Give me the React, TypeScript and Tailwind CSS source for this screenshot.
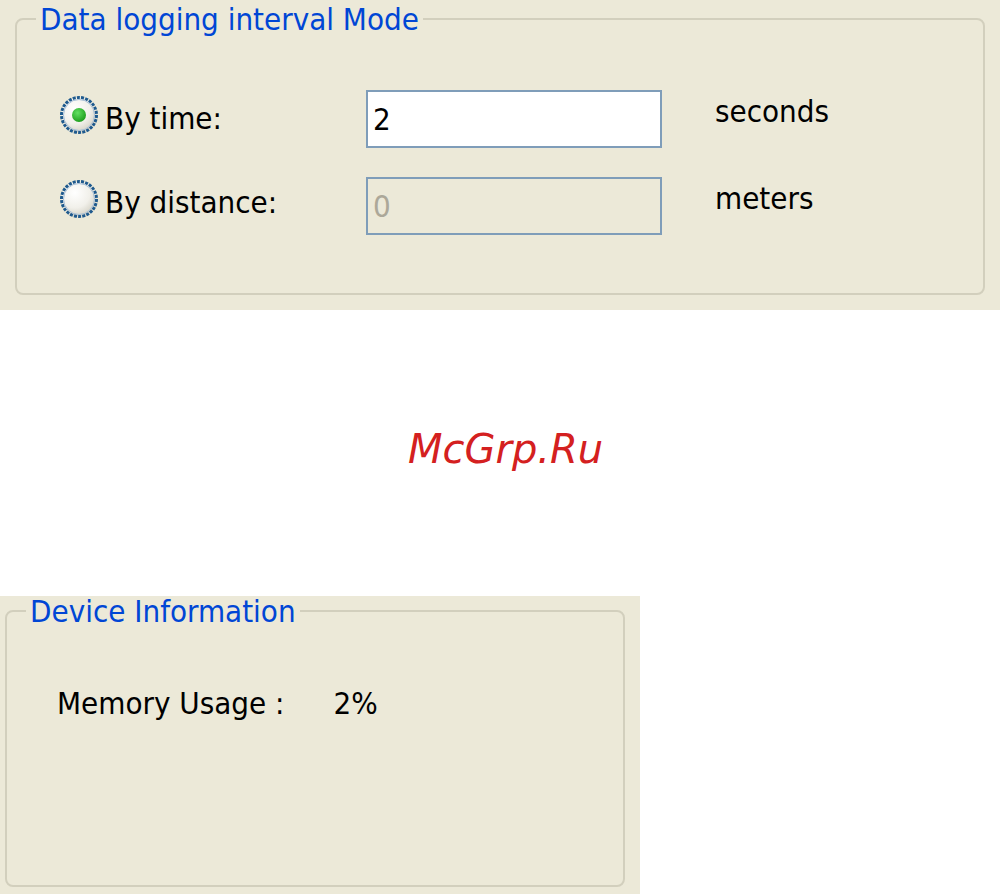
import type { ReactNode } from "react";

const font = "font-['DejaVu_Sans_Condensed','DejaVu_Sans',sans-serif]";

function Radio({ checked, className }: { checked?: boolean; className?: string }) {
  const id = checked ? "rg1" : "rg2";
  return (
    <svg width="40" height="40" viewBox="0 0 40 40" className={`shrink-0 ${className ?? ""}`}>
      <defs>
        <radialGradient id={id} cx="38%" cy="32%" r="72%">
          <stop offset="0%" stopColor="#ffffff" />
          <stop offset="60%" stopColor="#f1f0ea" />
          <stop offset="100%" stopColor="#d2cfc2" />
        </radialGradient>
        <radialGradient id="dot" cx="40%" cy="35%" r="70%">
          <stop offset="0%" stopColor="#62e062" />
          <stop offset="100%" stopColor="#1a9b1a" />
        </radialGradient>
      </defs>
      <circle cx="20" cy="20" r="17.5" fill={`url(#${id})`} stroke="#1f5a8e" strokeWidth="3" strokeDasharray="3 1.2" />
      <circle cx="20" cy="20" r="15.5" fill="none" stroke="#a7bfd6" strokeWidth="1" />
      {checked && <circle cx="20" cy="20" r="7" fill="url(#dot)" />}
    </svg>
  );
}

function Group({ title, children, className }: { title: string; children: ReactNode; className: string }) {
  return (
    <fieldset className={`rounded-[8px] border-2 border-[#d2cfbd] ${className}`}>
      <legend className="ml-[19px] px-[4px] text-[31px] leading-[30px] text-[#0046d5]">{title}</legend>
      {children}
    </fieldset>
  );
}

export default function App() {
  return (
    <div className={`flex h-[894px] w-[1000px] flex-col bg-white text-black ${font}`}>
      <div className="h-[310px] w-full bg-[#ece9d8] px-[15px] pt-[4px]">
        <Group title="Data logging interval Mode" className="h-[291px]">
          <div className="grid grid-cols-[349px_296px_auto] gap-y-[29px] pt-[56px]">
            <div className="flex items-start pl-[42px]">
              <Radio checked className="mt-[5px]" />
              <span className="ml-[6px] mt-[13px] text-[31px] leading-[30px]">By time:</span>
            </div>
            <div className="flex h-[58px] items-center border-2 border-[#7f9db9] bg-white px-[5px] text-[31px]">2</div>
            <span className="ml-[53px] mt-[6px] text-[31px] leading-[30px]">seconds</span>

            <div className="flex items-start pl-[42px]">
              <Radio className="mt-[2px]" />
              <span className="ml-[6px] mt-[10px] text-[31px] leading-[30px]">By distance:</span>
            </div>
            <div className="flex h-[58px] items-center border-2 border-[#7f9db9] bg-[#ece9d8] px-[5px] text-[31px] text-[#aca899]">0</div>
            <span className="ml-[53px] mt-[6px] text-[31px] leading-[30px]">meters</span>
          </div>
        </Group>
      </div>

      <div className="flex h-[286px] items-center pb-[8px] pl-[408px]">
        <span className="font-['DejaVu_Sans',sans-serif] text-[40px] italic leading-none text-[#d42020]">McGrp.Ru</span>
      </div>

      <div className="h-[298px] w-[640px] bg-[#ece9d8] pl-[5px] pr-[15px]">
        <Group title="Device Information" className="h-[291px]">
          <div className="flex pl-[50px] pt-[62px] text-[31px] leading-[30px]">
            <span>Memory Usage :</span>
            <span className="ml-[49px]">2%</span>
          </div>
        </Group>
      </div>
    </div>
  );
}
